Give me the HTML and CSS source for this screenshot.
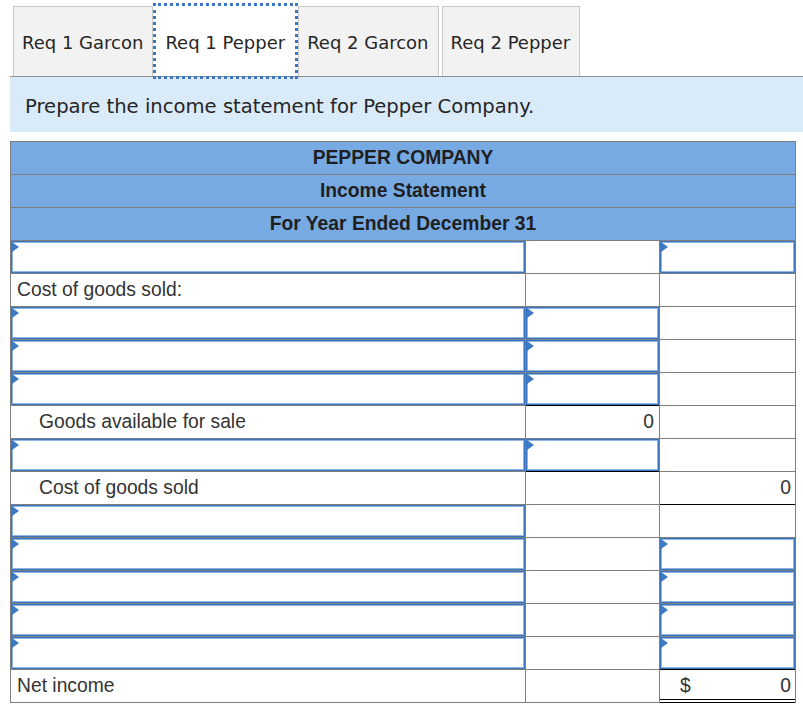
FILE: index.html
```html
<!DOCTYPE html>
<html lang="en">
<head>
<meta charset="utf-8">
<title>Income Statement</title>
<link rel="stylesheet" href="styles.css">
</head>
<body>
<div class="page">
  <div class="tabs">
    <div class="tab">Req 1 Garcon</div>
    <div class="tab active">Req 1 Pepper</div>
    <div class="tab">Req 2 Garcon</div>
    <div class="tab">Req 2 Pepper</div>
  </div>
  <div class="prompt">Prepare the income statement for Pepper Company.</div>
  <div class="sheet">
    <div class="hd">PEPPER COMPANY</div>
    <div class="hd">Income Statement</div>
    <div class="hd">For Year Ended December 31</div>

    <div class="c inp"></div><div class="c"></div><div class="c inp"></div>

    <div class="c txt">Cost of goods sold:</div><div class="c"></div><div class="c"></div>

    <div class="c inp"></div><div class="c inp"></div><div class="c"></div>
    <div class="c inp"></div><div class="c inp"></div><div class="c"></div>
    <div class="c inp"></div><div class="c inp rule"></div><div class="c"></div>

    <div class="c txt indent">Goods available for sale</div><div class="c num n2">0</div><div class="c"></div>

    <div class="c inp"></div><div class="c inp rule"></div><div class="c"></div>

    <div class="c txt indent">Cost of goods sold</div><div class="c"></div><div class="c num n3 underl">0</div>

    <div class="c inp"></div><div class="c"></div><div class="c"></div>
    <div class="c inp"></div><div class="c"></div><div class="c inp"></div>
    <div class="c inp"></div><div class="c"></div><div class="c inp"></div>
    <div class="c inp"></div><div class="c"></div><div class="c inp"></div>
    <div class="c inp"></div><div class="c"></div><div class="c inp"></div>

    <div class="c txt">Net income</div><div class="c"></div><div class="c total"><span>$</span><span>0</span></div>
  </div>
</div>
</body>
</html>
```
FILE: styles.css
```css
* { box-sizing: border-box; }

body {
  margin: 0;
  background: #fff;
  color: #333;
}

.page {
  width: 803px;
}

.tabs {
  display: flex;
  margin: 6px 0 0 10px;
  padding-left: 3px;
  border-bottom: 1px solid #8f8f8f;
  height: 71px;
}

.tab {
  height: 70px;
  margin-right: 3px;
  padding: 2px 9px 0 8px;
  display: flex;
  align-items: center;
  background: #f2f2f2;
  border: 1px solid #c8c8c8;
  border-bottom: none;
  font-family: "DejaVu Sans", Verdana, sans-serif;
  font-size: 18px;
  color: #262626;
  white-space: nowrap;
}

.tab.active {
  background: #fff;
  border-color: #fff;
  outline: 3px dotted #3b77c2;
}

.prompt {
  margin-left: 10px;
  height: 55px;
  padding: 3px 0 0 15px;
  display: flex;
  align-items: center;
  background: #d9eaf9;
  font-family: "DejaVu Sans", Verdana, sans-serif;
  font-size: 19.6px;
  color: #262626;
}

.sheet {
  margin: 9px 0 0 10px;
  width: 786px;
  display: grid;
  grid-template-columns: 514px 133px 135px;
  grid-auto-rows: 32px;
  gap: 1px;
  padding: 1px;
  background: #7f7f7f;
  font-family: "Liberation Sans", Arial, sans-serif;
  font-size: 19.3px;
}

.hd {
  grid-column: 1 / -1;
  background: #77aae3;
  display: flex;
  align-items: center;
  justify-content: center;
  font-weight: bold;
  color: #1f1f1f;
}

.c {
  background: #fff;
  position: relative;
  display: flex;
  align-items: center;
  color: #333;
}

.txt { padding-left: 6px; }
.indent { padding-left: 28px; }

.num { justify-content: flex-end; }
.n2 { padding-right: 5px; }
.n3 { padding-right: 4px; }

.inp {
  border: 1px solid #3a74bf;
  box-shadow: inset 0 0 0 1px #8fb4e1;
}

.inp::before {
  content: "";
  position: absolute;
  left: 0;
  top: 0;
  border-left: 7px solid #3c7ac6;
  border-top: 5.5px solid transparent;
  border-bottom: 5.5px solid transparent;
}

.inp.rule {
  box-shadow: inset 0 0 0 1px #8fb4e1, 0 1px 0 #000;
}

.underl {
  box-shadow: 0 1px 0 #000;
}

.total {
  justify-content: space-between;
  padding: 0 4px 0 20px;
  box-shadow: 0 -1px 0 #000, 0 1px 0 #000, inset 0 -2px 0 #fff, inset 0 -3px 0 #000;
}
```
